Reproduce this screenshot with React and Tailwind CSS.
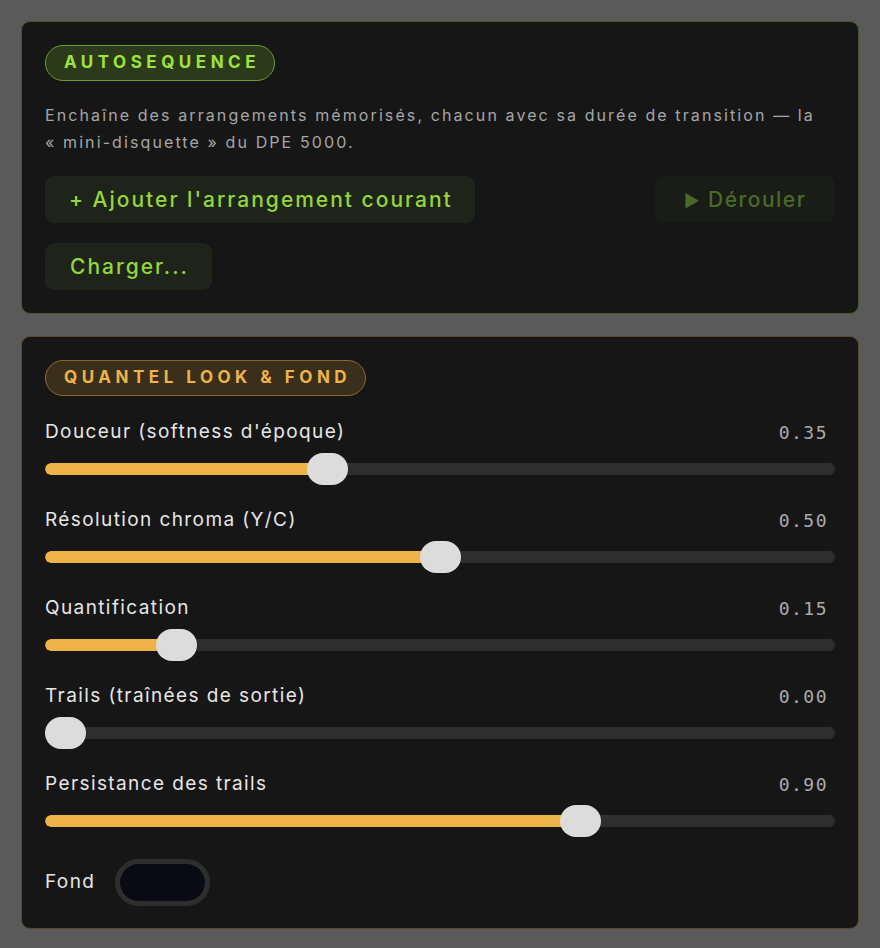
import React from "react";

const sliders = [
  { label: "Douceur (softness d'époque)", value: "0.35", frac: 0.35 },
  { label: "Résolution chroma (Y/C)", value: "0.50", frac: 0.5 },
  { label: "Quantification", value: "0.15", frac: 0.148 },
  { label: "Trails (traînées de sortie)", value: "0.00", frac: 0 },
  { label: "Persistance des trails", value: "0.90", frac: 0.688 },
];

function Slider({ label, value, frac }) {
  return (
    <div className="flex flex-col">
      <div className="flex items-center justify-between h-[26px]">
        <span className="text-[19px] text-[#e6e6e6] tracking-[1.4px]">{label}</span>
        <span
          className="text-[18px] text-[#ababab] pr-[7px] tracking-[1.5px]"
          style={{ fontFamily: '"DejaVu Sans Mono", monospace' }}
        >
          {value}
        </span>
      </div>
      <div className="relative h-[32px] mt-[8px] flex items-center">
        <div className="h-[12px] w-full rounded-full bg-[#2e2e2e] overflow-hidden">
          <div
            className="h-full bg-[#efb449] rounded-full"
            style={{ width: `calc(20px + ${frac} * (100% - 41px))` }}
          />
        </div>
        <div
          className="absolute top-0 h-[32px] w-[41px] rounded-[16px] bg-[#dcdcdc]"
          style={{ left: `calc(${frac} * (100% - 41px))` }}
        />
      </div>
    </div>
  );
}

export default function App() {
  return (
    <div
      className="min-h-[948px] bg-[#5a5a5a] px-[21px] pt-[21px] flex flex-col gap-[22px]"
      style={{ fontFamily: 'Inter, "Noto Sans", sans-serif' }}
    >
      <section className="rounded-[9px] border border-[#4b5a2c] bg-[#161616] px-[23px] pt-[23px] pb-[23px]">
        <div className="inline-flex h-[36px] items-center rounded-full border-[1.5px] border-[#6f9a2e] bg-[#2b3a1b] pl-[18px] pr-[14px]">
          <span className="text-[17px] font-bold tracking-[4.5px] text-[#9fe33d]">AUTOSEQUENCE</span>
        </div>
        <p className="mt-[21px] text-[16px] leading-[27px] tracking-[2.1px] text-[#a6a6a6]">
          Enchaîne des arrangements mémorisés, chacun avec sa durée de transition — la
          <br />« mini-disquette » du DPE 5000.
        </p>
        <div className="mt-[20px] flex items-start justify-between">
          <button className="h-[47px] rounded-[9px] bg-[#1f241a] pl-[24px] pr-[22px] text-[21px] tracking-[2px] font-medium text-[#94d63c]">
            + Ajouter l'arrangement courant
          </button>
          <button className="h-[47px] w-[180px] rounded-[9px] bg-[#1a1d17] text-[21px] tracking-[1.5px] font-medium text-[#4a6a28]">
            <span className="text-[17px]">▶</span> Dérouler
          </button>
        </div>
        <button className="mt-[20px] h-[47px] rounded-[9px] bg-[#1f241a] pl-[25px] pr-[23px] text-[21px] tracking-[2px] font-medium text-[#94d63c]">
          Charger...
        </button>
      </section>

      <section className="rounded-[9px] border border-[#5b4a26] bg-[#161616] px-[23px] pt-[23px] pb-[22px]">
        <div className="inline-flex h-[36px] items-center rounded-full border-[1.5px] border-[#8c6a2c] bg-[#3a2f1b] pl-[18px] pr-[14px]">
          <span className="text-[17px] font-bold tracking-[4.5px] text-[#efb449]">QUANTEL LOOK &amp; FOND</span>
        </div>
        <div className="mt-[23px] flex flex-col gap-[22px]">
          {sliders.map((s) => (
            <Slider key={s.label} {...s} />
          ))}
        </div>
        <div className="mt-[22px] flex items-center gap-[20px]">
          <span className="text-[19px] tracking-[1.4px] text-[#e6e6e6]">Fond</span>
          <div className="h-[47px] w-[95px] rounded-full bg-[#2e2e2e] p-[5px]">
            <div className="h-full w-full rounded-full bg-[#0a0a14]" />
          </div>
        </div>
      </section>
    </div>
  );
}
